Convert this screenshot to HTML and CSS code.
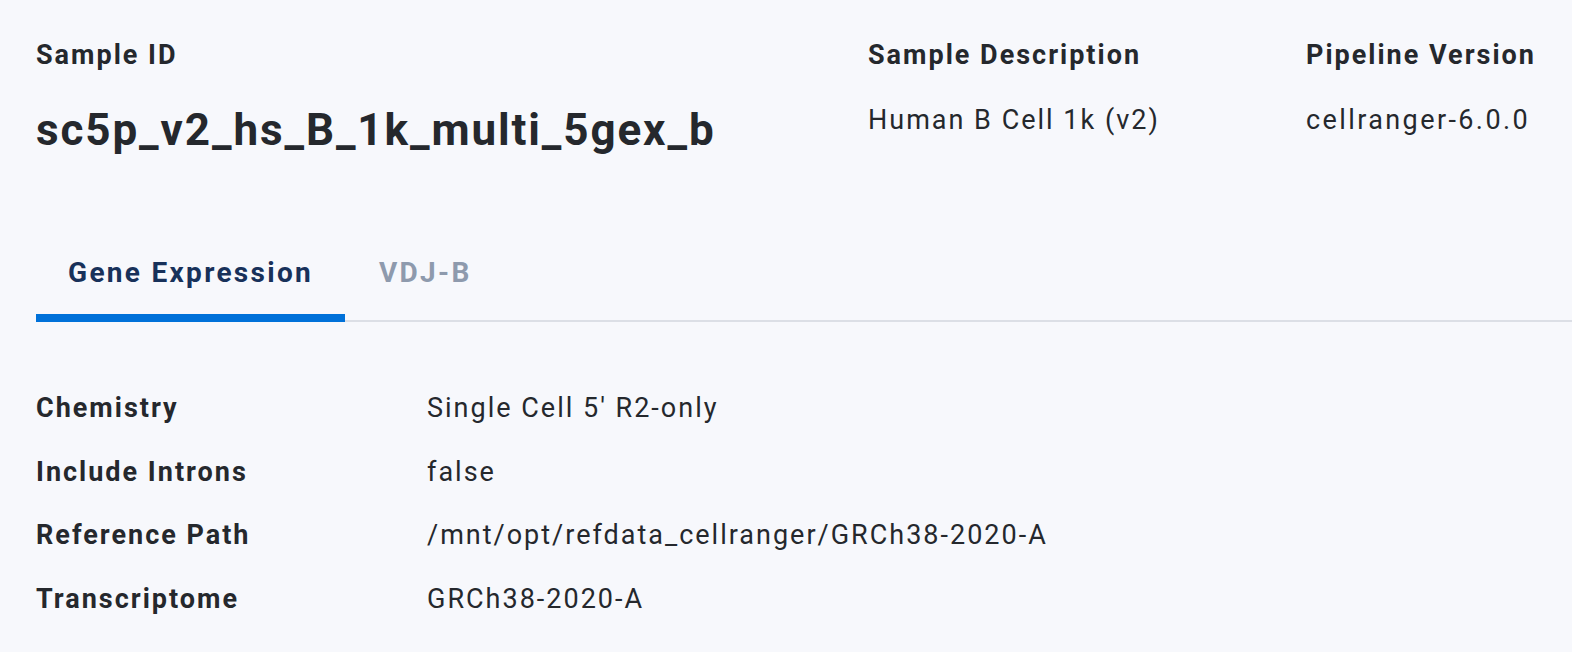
FILE: index.html
```html
<!DOCTYPE html>
<html lang="en">
<head>
<meta charset="utf-8">
<title>Sample summary</title>
<link rel="stylesheet" href="styles.css">
</head>
<body>
<main class="page">
  <header class="summary">
    <div class="field field-id">
      <div class="label">Sample ID</div>
      <h1 class="title">sc5p_v2_hs_B_1k_multi_5gex_b</h1>
    </div>
    <div class="field field-desc">
      <div class="label">Sample Description</div>
      <div class="value">Human B Cell 1k (v2)</div>
    </div>
    <div class="field field-ver">
      <div class="label">Pipeline Version</div>
      <div class="value">cellranger-6.0.0</div>
    </div>
  </header>

  <nav class="tabs">
    <div class="tab active">Gene Expression</div>
    <div class="tab">VDJ-B</div>
  </nav>

  <dl class="details">
    <dt>Chemistry</dt><dd>Single Cell 5' R2-only</dd>
    <dt>Include Introns</dt><dd>false</dd>
    <dt>Reference Path</dt><dd>/mnt/opt/refdata_cellranger/GRCh38-2020-A</dd>
    <dt>Transcriptome</dt><dd>GRCh38-2020-A</dd>
  </dl>
</main>
</body>
</html>
```

FILE: styles.css
```css
html, body {
  margin: 0;
  padding: 0;
  background: #f7f8fc;
}
body {
  font-family: Roboto, "Noto Sans", "Liberation Sans", sans-serif;
  color: #25282d;
  width: 1572px;
  height: 652px;
  overflow: hidden;
}
.page {
  padding: 38px 0 0 36px;
}
.summary {
  display: grid;
  grid-template-columns: 832px 438px auto;
  align-items: start;
  padding-top: 1px;
}
.label {
  font-size: 27px;
  line-height: 32px;
  font-weight: 700;
  letter-spacing: 2px;
  margin-bottom: 33px;
}
.title {
  margin: 0;
  font-size: 44px;
  line-height: 52px;
  font-weight: 700;
  letter-spacing: 1.9px;
}
.value {
  font-size: 27px;
  line-height: 32px;
  font-weight: 400;
  letter-spacing: 2px;
}
.field-ver .value {
  letter-spacing: 2.4px;
}
.tabs {
  display: flex;
  margin-top: 101px;
  border-bottom: 2px solid #dcdfe6;
}
.tab {
  font-size: 28px;
  line-height: 32px;
  font-weight: 700;
  letter-spacing: 2.3px;
  color: #8e9aad;
  padding: 0 32px 25px 34px;
  border-bottom: 8px solid transparent;
  margin-bottom: -2px;
}
.tab.active {
  color: #18315a;
  border-bottom-color: #0071d9;
  padding-left: 32px;
}
.details {
  margin: 70px 0 0 0;
  display: grid;
  grid-template-columns: 391px auto;
  row-gap: 31.7px;
  font-size: 27px;
  line-height: 32px;
  letter-spacing: 2px;
}
.details dt {
  font-weight: 700;
}
.details dd {
  margin: 0;
  font-weight: 400;
}
```
